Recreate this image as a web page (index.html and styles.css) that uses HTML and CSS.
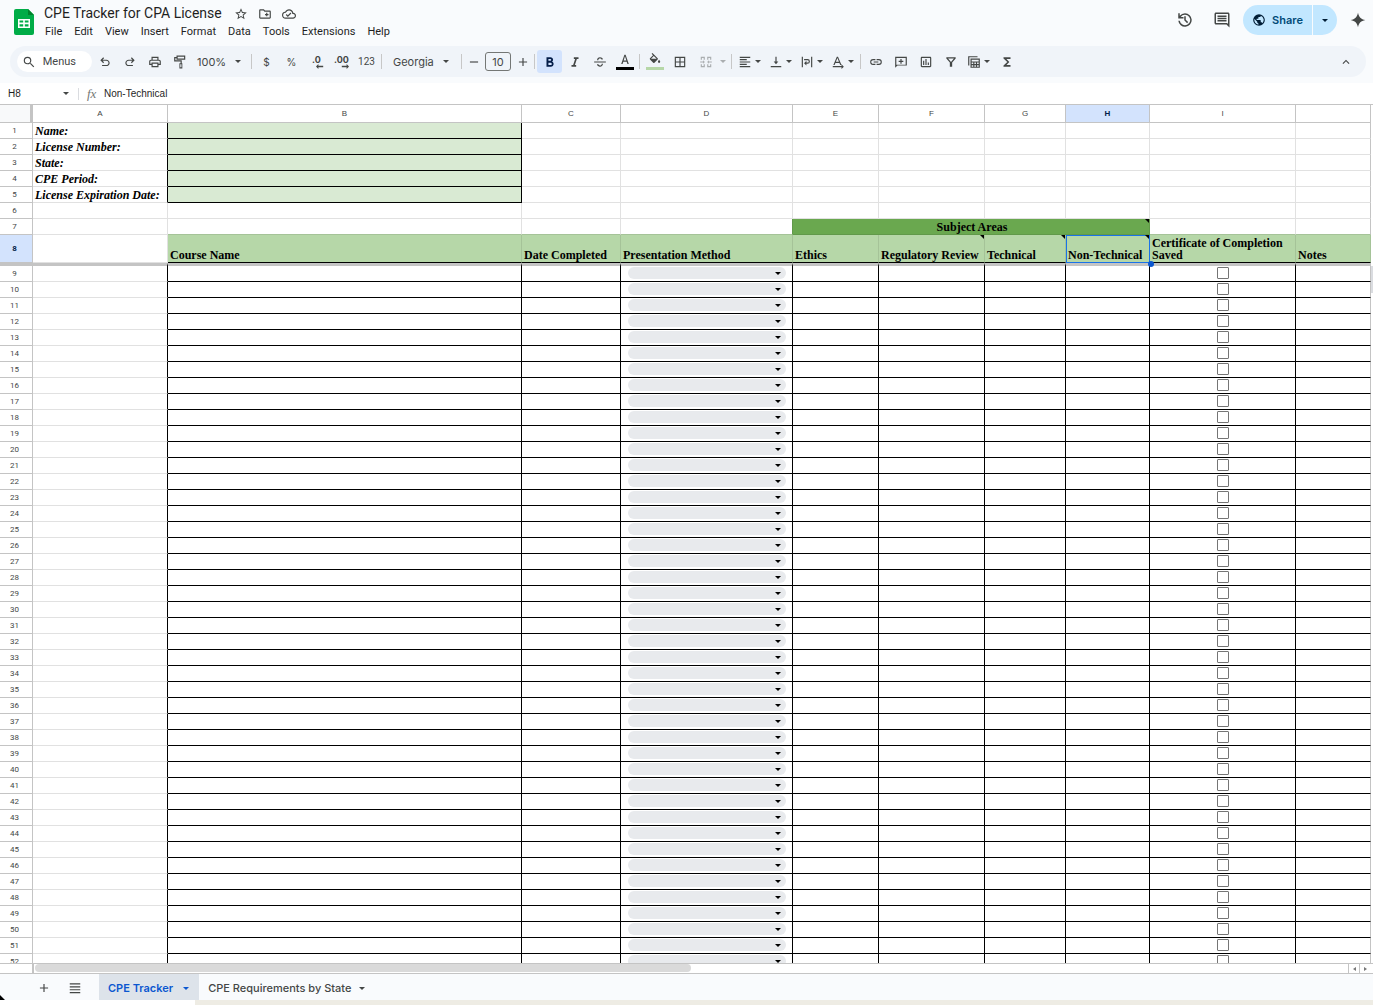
FILE: index.html
```
<!DOCTYPE html>
<html lang="en">
<head>
    <meta charset="utf-8">
    <title>CPE Tracker for CPA License</title>
    <link rel="stylesheet" href="styles.css">
</head>
<body>
<div id="header">
    <div id="titlebar">
        <svg class="logo" viewBox="0 0 20 26">
            <path fill="#00ac47" d="M2 0h12l6 6v18a2 2 0 0 1-2 2H2a2 2 0 0 1-2-2V2a2 2 0 0 1 2-2z"/>
            <path fill="#00832d" d="M14 0l6 6h-6z"/>
            <path fill="#fff" fill-rule="evenodd" d="M4 10h12v9H4zM5.500 11.500v2h3.700v-2zM10.800 11.500v2h3.700v-2zM5.500 15.200v2.300h3.700v-2.300zM10.800 15.200v2.300h3.700v-2.300z"/>
        </svg>
        <div id="names">
            <div class="title">
                <h1>CPE Tracker for CPA License</h1>
                <button aria-label="Star"><svg viewBox="0 0 24 24"><path d="M22 9.240l-7.190-.620L12 2 9.190 8.630 2 9.240l5.460 4.730L5.820 21 12 17.270 18.180 21l-1.630-7.030L22 9.240zM12 15.400l-3.760 2.270 1-4.280-3.320-2.880 4.380-.380L12 6.100l1.710 4.040 4.380.380-3.320 2.880 1 4.280L12 15.400z"/></svg></button>
                <button aria-label="Move"><svg viewBox="0 0 24 24"><path d="M20 6h-8l-2-2H4c-1.100 0-2 .9-2 2v12c0 1.100.9 2 2 2h16c1.100 0 2-.9 2-2V8c0-1.100-.9-2-2-2zm0 12H4V6h5.200l2 2H20v10zm-8-4h2v2h2v-2h2v-2h-2v-2h-2v2h-2z"/></svg></button>
                <button aria-label="Saved"><svg viewBox="0 0 24 24"><path d="M19.350 10.040A7.490 7.490 0 0 0 12 4C9.110 4 6.600 5.640 5.350 8.040A5.994 5.994 0 0 0 0 14c0 3.310 2.690 6 6 6h13c2.760 0 5-2.240 5-5 0-2.640-2.050-4.780-4.650-4.960zM19 18H6c-2.210 0-4-1.790-4-4 0-2.050 1.530-3.760 3.560-3.970l1.070-.11.5-.95A5.469 5.469 0 0 1 12 6c2.620 0 4.880 1.860 5.390 4.430l.3 1.500 1.530.11A2.980 2.980 0 0 1 22 15c0 1.650-1.350 3-3 3zm-9-3.820l-2.090-2.090L6.500 13.500 10 17l6.010-6.010-1.410-1.410z"/></svg></button>
            </div>
            <div class="menu">
                <button>File</button>
                <button>Edit</button>
                <button>View</button>
                <button>Insert</button>
                <button>Format</button>
                <button>Data</button>
                <button>Tools</button>
                <button>Extensions</button>
                <button>Help</button>
            </div>
        </div>
        <div id="actions">
            <button class="big" aria-label="History"><svg viewBox="0 0 24 24"><path d="M12 3a9 9 0 0 0-7 3.350V3H3v7h7V8H6.260A7 7 0 1 1 5.070 13H3.050A9 9 0 1 0 12 3zm-1 4v5.410l3.800 3.800 1.400-1.420-3.200-3.200V7z"/></svg></button>
            <button class="big" aria-label="Comments"><svg viewBox="0 0 24 24"><path d="M21.990 4c0-1.100-.89-2-1.990-2H4c-1.100 0-2 .9-2 2v12c0 1.100.9 2 2 2h14l4 4-.010-18zM20 17.170L18.830 16H4V4h16v13.170zM6 12h12v2H6zm0-3h12v2H6zm0-3h12v2H6z"/></svg></button>
            <div class="share">
                <button class="go"><svg viewBox="0 0 24 24"><path d="M12 2a10 10 0 1 0 0 20 10 10 0 0 0 0-20zm-1 17.930A8 8 0 0 1 4.210 10.210L9 15v1c0 1.100.9 2 2 2v1.930zm6.900-2.540A2 2 0 0 0 16 16h-1v-3c0-.55-.45-1-1-1H8v-2h2c.55 0 1-.45 1-1V7h2c1.100 0 2-.9 2-2v-.41a8 8 0 0 1 2.900 12.800z"/></svg>Share</button>
                <button class="more" aria-label="Share options"><i class="caret"></i></button>
            </div>
            <button class="gem" aria-label="Gemini"><svg viewBox="0 0 24 24"><path d="M12 1c1.300 6.500 4.500 9.700 11 11-6.500 1.300-9.700 4.500-11 11-1.300-6.500-4.500-9.700-11-11 6.500-1.300 9.700-4.500 11-11z"/></svg></button>
        </div>
    </div>

    <div id="toolbar">
        <button class="search"><svg viewBox="0 0 24 24"><path d="M15.500 14h-.79l-.28-.27A6.471 6.471 0 0 0 16 9.500 6.500 6.500 0 1 0 9.500 16c1.610 0 3.090-.59 4.230-1.570l.27.28v.79l5.500 5.500L21 19.500 15.500 14zm-6 0a4.500 4.500 0 1 1 0-9 4.500 4.500 0 0 1 0 9z"/></svg>Menus</button>
        <button aria-label="Undo"><svg viewBox="0 0 24 24"><path d="M7 19v-2h7.100c2.200 0 3.900-1.600 3.900-3.500S16.300 10 14.100 10H7.800l2.600 2.600L9 14 4 9l5-5 1.400 1.400L7.800 8h6.300c3.300 0 5.900 2.400 5.900 5.500S17.400 19 14.100 19z"/></svg></button>
        <button aria-label="Redo"><svg viewBox="0 0 24 24"><path d="M17 19v-2H9.900C7.700 17 6 15.400 6 13.500S7.700 10 9.900 10h6.300l-2.600 2.600L15 14l5-5-5-5-1.400 1.400L16.200 8H9.900C6.600 8 4 10.400 4 13.500S6.600 19 9.900 19z"/></svg></button>
        <button aria-label="Print"><svg viewBox="0 0 24 24"><path d="M19 8h-1V3H6v5H5c-1.660 0-3 1.340-3 3v6h4v4h12v-4h4v-6c0-1.660-1.340-3-3-3zM8 5h8v3H8V5zm8 14H8v-4h8v4zm4-4h-2v-2H6v2H4v-4c0-.55.45-1 1-1h14c.55 0 1 .45 1 1v4z"/></svg></button>
        <button aria-label="Paint format"><svg viewBox="0 0 24 24"><path d="M6 1h15v7H6V5.500H4V9h11v5h1v9h-5v-9h2v-3H2V3.500h4zM8 3v3h11V3zM12.500 16v5h2v-5z"/></svg></button>
        <button class="zoom">100%<i class="caret"></i></button>
        <span class="sep"></span>
        <button class="txt">$</button>
        <button class="txt">%</button>
        <button class="dec" aria-label="Decrease decimals">.0<svg viewBox="0 0 10 6"><path d="M3 0L0 3l3 3V4h6V2H3z"/></svg></button>
        <button class="dec" aria-label="Increase decimals">.00<svg viewBox="0 0 10 6"><path d="M7 0l3 3-3 3V4H1V2h6z"/></svg></button>
        <button class="txt small">123</button>
        <span class="sep"></span>
        <button class="font">Georgia<i class="caret"></i></button>
        <span class="sep"></span>
        <button class="step" aria-label="Smaller"><svg viewBox="0 0 24 24"><path d="M5 11h14v2H5z"/></svg></button>
        <input type="text" class="size" value="10" aria-label="Font size">
        <button class="step" aria-label="Larger"><svg viewBox="0 0 24 24"><path d="M19 13h-6v6h-2v-6H5v-2h6V5h2v6h6v2z"/></svg></button>
        <span class="sep"></span>
        <button class="on" aria-label="Bold"><svg viewBox="0 0 24 24"><path d="M15.600 11.200c1-.7 1.700-1.800 1.700-2.900C17.300 5.600 15.200 4 12.800 4H6v16h7.500c2.600 0 4.700-2 4.700-4.600 0-1.900-1-3.500-2.600-4.200zM9.300 6.700h3.200a1.600 1.600 0 0 1 0 3.200H9.300zm3.700 10.600H9.300v-4.100H13a2 2 0 0 1 0 4.100z"/></svg></button>
        <button aria-label="Italic"><svg viewBox="0 0 24 24"><path d="M10 4v3h2.210l-3.420 10H6v3h8v-3h-2.210l3.420-10H18V4z"/></svg></button>
        <button aria-label="Strikethrough"><svg viewBox="0 0 24 24"><path d="M2 11h20v2H2zM7 9c0-3 2-5 5-5 2.500 0 4.300 1.200 5 3.300l-2 .8c-.5-1.400-1.500-2.100-3-2.100-1.800 0-2.900 1.100-2.900 3zM17 15c0 3-2 5-5 5-2.600 0-4.500-1.300-5.200-3.600l2-.8c.5 1.600 1.600 2.400 3.200 2.400 1.900 0 3-1.100 3-3z"/></svg></button>
        <button class="color" aria-label="Text color"><svg viewBox="0 0 24 24"><path d="M11 3L5.500 19h2.300l1.300-4h5.800l1.300 4h2.300L13 3h-2zm-1.300 10L12 5.700 14.300 13z"/></svg><i class="bar black"></i></button>
        <span class="sep"></span>
        <button class="color" aria-label="Fill color"><svg viewBox="0 0 24 24"><path d="M16.560 8.940L7.620 0 6.210 1.410l2.380 2.380-5.150 5.150a1.490 1.490 0 0 0 0 2.120l5.500 5.500c.29.290.68.440 1.060.440s.77-.15 1.060-.44l5.500-5.500c.59-.58.59-1.530 0-2.120zM19 11.500s-2 2.170-2 3.500a2 2 0 0 0 4 0c0-1.330-2-3.500-2-3.500zM5.210 10L10 5.210 14.790 10H5.210z"/></svg><i class="bar green"></i></button>
        <button aria-label="Borders"><svg viewBox="0 0 24 24"><path d="M3 3v18h18V3H3zm8 16H5v-6h6v6zm0-8H5V5h6v6zm8 8h-6v-6h6v6zm0-8h-6V5h6v6z"/></svg></button>
        <button class="drop wide off" aria-label="Merge"><svg viewBox="0 0 24 24"><path d="M3 3h7v5H8V5H5v3H3zM14 3h7v5h-2V5h-3v3h-2zM3 16h2v3h3v-3h2v5H3zM14 16h2v3h3v-3h2v5h-7zM2 11h5V9l3 3-3 3v-2H2zM22 11h-5V9l-3 3 3 3v-2h5z"/></svg><i class="caret"></i></button>
        <span class="sep"></span>
        <button class="drop" aria-label="Align"><svg viewBox="0 0 24 24"><path d="M15 15H3v2h12v-2zm0-8H3v2h12V7zM3 13h18v-2H3v2zm0 8h18v-2H3v2zM3 3v2h18V3H3z"/></svg><i class="caret"></i></button>
        <button class="drop" aria-label="Vertical align"><svg viewBox="0 0 24 24"><path d="M16 11h-3V3h-2v8H8l4 5 4-5zM3 19v2h18v-2z"/></svg><i class="caret"></i></button>
        <button class="drop" aria-label="Wrap"><svg viewBox="0 0 24 24"><path d="M3 3h2v18H3zM19 3h2v18h-2zM7 7h6a4 4 0 0 1 0 8h-2v3l-4-4 4-4v3h2a2 2 0 0 0 0-4H7z"/></svg><i class="caret"></i></button>
        <button class="drop" aria-label="Rotate"><svg viewBox="0 0 24 24"><path d="M10 3L4 17h2.200l1.400-3.500h6.800l1.400 3.500H18L12 3zM8.400 11.600L11 5l2.600 6.600zM3 19h15v-3l4 4-4 4v-3H3z"/></svg><i class="caret"></i></button>
        <span class="sep"></span>
        <button aria-label="Link"><svg viewBox="0 0 24 24"><path d="M3.900 12c0-1.710 1.390-3.100 3.100-3.100h4V7H7a5 5 0 0 0 0 10h4v-1.900H7c-1.710 0-3.100-1.390-3.100-3.100zM8 13h8v-2H8v2zm9-6h-4v1.900h4a3.100 3.100 0 0 1 0 6.200h-4V17h4a5 5 0 0 0 0-10z"/></svg></button>
        <button aria-label="Add comment"><svg viewBox="0 0 24 24"><path d="M2 22V3h20v15H6zM4 16.500h16V5H4zM11 7h2v3h3v2h-3v3h-2v-3H8v-2h3z" fill-rule="evenodd"/></svg></button>
        <button aria-label="Chart"><svg viewBox="0 0 24 24"><path d="M19 3H5c-1.100 0-2 .9-2 2v14c0 1.100.9 2 2 2h14c1.100 0 2-.9 2-2V5c0-1.100-.9-2-2-2zm0 16H5V5h14v14zM7 10h2v7H7zm4-3h2v10h-2zm4 6h2v4h-2z"/></svg></button>
        <button aria-label="Filter"><svg viewBox="0 0 24 24"><path d="M4 4h16v2l-6 7v7h-4v-7L4 6zM7 6l5 6 5-6z" fill-rule="evenodd"/></svg></button>
        <button class="drop" aria-label="Table views"><svg viewBox="0 0 24 24"><path d="M2 2h16v2H4v14H2zM6 6h16v16H6zM8 8v3h12V8zM8 13v2.500h2.700V13zM12.700 13v2.500h2.600V13zM17.300 13v2.500H20V13zM8 17.500V20h2.700v-2.500zM12.700 17.500V20h2.600v-2.500zM17.300 17.500V20H20v-2.500z" fill-rule="evenodd"/></svg><i class="caret"></i></button>
        <button aria-label="Functions"><svg viewBox="0 0 24 24"><path d="M18 4H6v2l6.500 6L6 18v2h12v-3h-7l5-5-5-5h7V4z"/></svg></button>
        <button class="fold" aria-label="Hide menus"><svg viewBox="0 0 24 24"><path d="M12 8l-6 6 1.410 1.410L12 10.830l4.590 4.580L18 14l-6-6z"/></svg></button>
    </div>
</div>

<div id="formula">
    <button class="cellname">H8<i class="caret"></i></button>
    <span class="fx">fx</span>
    <input type="text" value="Non-Technical" aria-label="Formula">
</div>

<div id="main">
    <div id="sheet">
        <table>
            <colgroup>
                <col class="w-num"><col class="w-a"><col class="w-b"><col class="w-c"><col class="w-d"><col class="w-e">
                <col class="w-f"><col class="w-g"><col class="w-h"><col class="w-i"><col>
            </colgroup>
            <thead>
                <tr><th class="corner"></th><th>A</th><th>B</th><th>C</th><th>D</th><th>E</th><th>F</th><th>G</th><th class="sel">H</th><th>I</th><th></th></tr>
            </thead>
            <tbody id="top">
                <tr class="info"><th>1</th><td>Name:</td><td></td><td></td><td></td><td></td><td></td><td></td><td></td><td></td><td></td></tr>
                <tr class="info"><th>2</th><td>License Number:</td><td></td><td></td><td></td><td></td><td></td><td></td><td></td><td></td><td></td></tr>
                <tr class="info"><th>3</th><td>State:</td><td></td><td></td><td></td><td></td><td></td><td></td><td></td><td></td><td></td></tr>
                <tr class="info"><th>4</th><td>CPE Period:</td><td></td><td></td><td></td><td></td><td></td><td></td><td></td><td></td><td></td></tr>
                <tr class="info"><th>5</th><td>License Expiration Date:</td><td></td><td></td><td></td><td></td><td></td><td></td><td></td><td></td><td></td></tr>
                <tr><th>6</th><td></td><td></td><td></td><td></td><td></td><td></td><td></td><td></td><td></td><td></td></tr>
                <tr class="areas"><th>7</th><td></td><td></td><td></td><td class="before"></td><td colspan="4" class="subject note">Subject Areas</td><td></td><td></td></tr>
                <tr class="heads">
                    <th class="sel">8</th><td></td><td>Course Name</td><td>Date Completed</td><td>Presentation Method</td><td>Ethics</td>
                    <td class="note">Regulatory Review</td><td class="note">Technical</td><td class="note active">Non-Technical</td><td class="wrap">Certificate of Completion Saved</td><td>Notes</td>
                </tr>
            </tbody>
            <tbody id="rows"></tbody>
        </table>
    </div>
    <div id="vscroll"><i></i></div>
</div>

<div id="hscroll">
    <div class="track"><i></i></div>
    <button aria-label="Scroll left"><i class="left"></i></button>
    <button aria-label="Scroll right"><i class="right"></i></button>
</div>

<div id="tabs">
    <button class="ic" aria-label="Add sheet"><svg viewBox="0 0 24 24"><path d="M19 13h-6v6h-2v-6H5v-2h6V5h2v6h6v2z"/></svg></button>
    <button class="ic" aria-label="All sheets"><svg viewBox="0 0 24 24"><path d="M3 4h18v2H3zM3 9h18v2H3zM3 14h18v2H3zM3 19h18v2H3z"/></svg></button>
    <button class="tab current">CPE Tracker<i class="caret"></i></button>
    <button class="tab">CPE Requirements by State<i class="caret"></i></button>
</div>
<div id="desk"></div>

<script>
    var html = "";
    for (var i = 9; i <= 52; i++) {
        html += "<tr><th>" + i + "</th><td></td><td></td><td></td>"
            + "<td><div class='pick'><select aria-label='Presentation method, row " + i + "'><option></option></select></div></td>"
            + "<td></td><td></td><td></td><td></td>"
            + "<td class='check'><input type='checkbox' aria-label='Certificate saved, row " + i + "'></td><td></td></tr>";
    }
    document.getElementById("rows").innerHTML = html;
</script>
</body>
</html>
```
FILE: styles.css
```
*{
    box-sizing:border-box;
}
body{
    margin:0;
    height:100vh;
    display:flex;
    flex-direction:column;
    overflow:hidden;
    background:#fff;
    font:11px Inter, "Liberation Sans", sans-serif;
    color:#1f1f1f;
}
button, input, select{
    margin:0;
    padding:0;
    border:0;
    background:none;
    font:inherit;
    color:inherit;
}
button{
    display:flex;
    align-items:center;
    justify-content:center;
    white-space:nowrap;
}
svg{
    display:block;
    flex:none;
    fill:#444746;
}
.caret{
    flex:none;
    border:3px solid transparent;
    border-top-color:#444746;
    border-bottom:0;
}

/* title and menus */
#header{
    flex:none;
    height:83px;
    background:#f9fbfd;
    padding:0 7px 0 10px;
}
#titlebar{
    display:flex;
    height:46px;
}
.logo{
    width:20px;
    height:26px;
    margin:9px 10px 0 4px;
}
#names{
    flex:1;
    padding-top:4px;
}
.title{
    display:flex;
    height:19px;
    align-items:center;
    gap:10px;
}
.title h1{
    margin:0 2px 0 0;
    font:14px/19px Roboto, sans-serif;
}
.title svg{
    width:14px;
    height:14px;
}
.menu{
    display:flex;
    gap:12px;
    padding-left:1px;
    height:17px;
    font:11px/17px Roboto, sans-serif;
}
#actions{
    display:flex;
    align-items:center;
    height:40px;
}
.big{
    width:37px;
}
.big svg{
    width:18px;
    height:18px;
}
.share{
    display:flex;
    gap:1px;
    height:30px;
    margin:0 13px 0 3px;
}
.share button{
    background:#c2e7ff;
}
.share .go{
    width:69px;
    gap:6px;
    border-radius:15px 0 0 15px;
    color:#004a77;
    font-weight:600;
}
.share .go svg{
    width:14px;
    height:14px;
    fill:#001d35;
}
.share .more{
    width:24px;
    border-radius:0 15px 15px 0;
}
.share .caret{
    border-top-color:#001d35;
}
.gem svg{
    width:16px;
    height:16px;
}

/* toolbar */
#toolbar{
    display:flex;
    align-items:center;
    height:31px;
    padding:0 7px;
    border-radius:16px;
    background:#f0f4f9;
    color:#444746;
}
#toolbar button{
    flex:none;
    width:25px;
    height:23px;
}
#toolbar svg{
    width:14px;
    height:14px;
}
#toolbar .search{
    width:75px;
    height:21px;
    padding-right:16px;
    gap:7px;
    border-radius:11px;
    background:#fff;
    justify-content:flex-end;
    font-family:Roboto, sans-serif;
}
#toolbar .zoom{
    width:57px;
    justify-content:space-between;
    padding:0 8px 0 5px;
}
#toolbar .font{
    width:75px;
    justify-content:space-between;
    padding:0 10px 0 9px;
}
.sep{
    flex:none;
    width:1px;
    height:15px;
    margin:0 2px;
    background:#c7c7c7;
}
#toolbar .txt{
    font-size:10px;
}
#toolbar .small{
    font-family:Roboto, sans-serif;
}
#toolbar .dec{
    flex-direction:column;
    align-items:center;
    font:bold 9px/9px Inter, sans-serif;
}
#toolbar .dec svg{
    width:8px;
    height:5px;
    margin-left:6px;
}
#toolbar .step{
    width:19px;
}
.size{
    width:26px;
    height:19px;
    margin:0 2px;
    border:1px solid #747775;
    border-radius:3px;
    text-align:center;
}
#toolbar .on{
    border-radius:3px;
    background:#d3e3fd;
}
#toolbar .on svg{
    fill:#041e49;
}
#toolbar .color{
    flex-direction:column;
}
.bar{
    width:18px;
    height:3px;
}
.black{
    background:#000;
}
.green{
    background:#b6d7a8;
}
#toolbar .drop{
    width:31px;
    justify-content:flex-start;
    gap:3px;
    padding-left:4px;
}
#toolbar .wide{
    width:37px;
    gap:7px;
    padding-left:7px;
}
.off{
    opacity:.4;
}
#toolbar .fold{
    margin-left:auto;
    margin-right:1px;
}

/* formula bar */
#formula{
    flex:none;
    display:flex;
    align-items:center;
    height:21px;
    font:10px "Liberation Sans", sans-serif;
}
.cellname{
    width:79px;
    height:12px;
    justify-content:space-between;
    padding:0 9px 0 8px;
    border-right:1px solid #dadce0;
}
.fx{
    width:25px;
    padding-left:8px;
    font:italic 13px/14px "Liberation Serif", serif;
    color:#747775;
}
#formula input{
    flex:1;
}

/* sheet */
#main{
    flex:1;
    min-height:0;
    display:flex;
    border-top:1px solid #c4c4c4;
}
#sheet{
    flex:1;
    min-width:0;
    overflow:hidden;
}
#vscroll{
    width:2px;
    padding-top:161px;
}
#vscroll i{
    display:block;
    height:27px;
    background:#dadce0;
}
table{
    width:100%;
    table-layout:fixed;
    border-collapse:separate;
    border-spacing:0;
}
.w-num{ width:33px; }
.w-a{ width:135px; }
.w-b{ width:354px; }
.w-c{ width:99px; }
.w-d{ width:172px; }
.w-e{ width:86px; }
.w-f{ width:106px; }
.w-g{ width:81px; }
.w-h{ width:84px; }
.w-i{ width:146px; }
th, td{
    height:16px;
    padding:0;
    border-right:1px solid #e1e1e1;
    border-bottom:1px solid #e1e1e1;
}
th{
    border-color:#c4c4c4;
    font:8px/12px Roboto, sans-serif;
    color:#444746;
}
tbody th{
    padding-right:3px;
}
thead th{
    height:18px;
    font-family:"Liberation Sans", sans-serif;
}
.corner{
    border-right:3px solid #c4c4c4;
    background:#f8f9fa;
}
th.sel{
    background:#d3e3fd;
    color:#041e49;
    font-weight:bold;
}
td{
    padding:0 0 1px 2px;
    vertical-align:bottom;
    white-space:nowrap;
    font:bold 12px/12px Georgia, "Liberation Serif", serif;
    color:#000;
}
td:last-child, thead th:last-child{
    border-right-color:#c4c4c4;
}
.info td:nth-child(2){
    border-right-color:#000;
    font-style:italic;
}
.info td:nth-child(3){
    background:#d9ead3;
    border-color:#000;
}
.areas .before{
    border-right-color:#61994a;
}
.areas .subject{
    background:#6aa84f;
    border-color:#61994a;
    text-align:center;
}
.areas td{
    border-bottom-color:#a5c398;
}
.areas td:nth-child(2){
    border-bottom-color:#e1e1e1;
}
.heads td{
    height:28px;
}
.heads td:nth-child(n+3){
    background:#b6d7a8;
    border-right-color:#a5c398;
    border-bottom-color:#000;
}
.heads .wrap{
    white-space:normal;
}
.note, .active{
    position:relative;
}
.note::before{
    content:"";
    position:absolute;
    top:0;
    right:0;
    border-top:4px solid #000;
    border-left:4px solid transparent;
}
#top .active{
    border-color:#1a73e8;
    box-shadow:inset 1px 1px #1a73e8;
}
.active::after{
    content:"";
    position:absolute;
    right:-5px;
    bottom:-5px;
    width:6px;
    height:6px;
    border-radius:50%;
    background:#0b57d0;
}

#rows tr:first-child > *{
    height:19px;
    border-top:3px solid #c4c4c4;
}
#rows td{
    border-color:#000;
}
#rows td:nth-child(2){
    border-bottom-color:#e1e1e1;
}
#rows td:last-child{
    border-right-color:#c4c4c4;
}
#rows tr:first-child td{
    border-top-color:#c4c4c4;
}
.pick{
    position:relative;
    margin:0 6px 1px 5px;
}
.pick select{
    display:block;
    width:100%;
    height:12px;
    appearance:none;
    border-radius:6px;
    background:#e8eaed;
}
.pick::after{
    content:"";
    position:absolute;
    top:5px;
    right:5px;
    border:3px solid transparent;
    border-top-color:#000;
    border-bottom:0;
}
.check{
    padding-left:0;
}
.check input{
    display:block;
    width:12px;
    height:12px;
    margin:0 auto 1px;
    appearance:none;
    border:1px solid #757575;
    border-radius:1px;
    background:#fff;
}

/* scrollbar and tabs */
#hscroll{
    flex:none;
    display:flex;
    height:11px;
    padding-right:3px;
    border-top:1px solid #c4c4c4;
    border-bottom:1px solid #c4c4c4;
}
#hscroll .track{
    flex:1;
    margin-left:32px;
    padding:0 1px;
    border-left:2px solid #c4c4c4;
}
#hscroll .track i{
    display:block;
    width:50%;
    height:8px;
    border-radius:4px;
    background:#dadada;
}
#hscroll button{
    width:11px;
    border-left:1px solid #c4c4c4;
}
#hscroll button i{
    border:2px solid transparent;
}
#hscroll .left{
    border-left:0;
    border-right:3px solid #777;
}
#hscroll .right{
    border-right:0;
    border-left:3px solid #777;
}
#tabs{
    flex:none;
    display:flex;
    height:26px;
    padding-left:28px;
    background:linear-gradient(45deg, #000 3px, #f9fbfd 4px);
    font-weight:500;
    color:#444746;
}
#tabs button{
    padding-top:2px;
}
#tabs svg{
    width:14px;
    height:14px;
}
.ic{
    width:31px;
}
.ic + .tab{
    margin-left:9px;
}
.tab{
    padding:0 9px;
    gap:8px;
}
.current{
    gap:10px;
    padding-right:10px;
    background:#dde3ea;
    color:#0b57d0;
    font-weight:600;
}
#tabs .current{
    background:#dde3ea;
}
.current .caret{
    border-top-color:#0b57d0;
}
#desk{
    flex:none;
    height:5px;
    margin-left:195px;
    background:#eeece4;
}
```
